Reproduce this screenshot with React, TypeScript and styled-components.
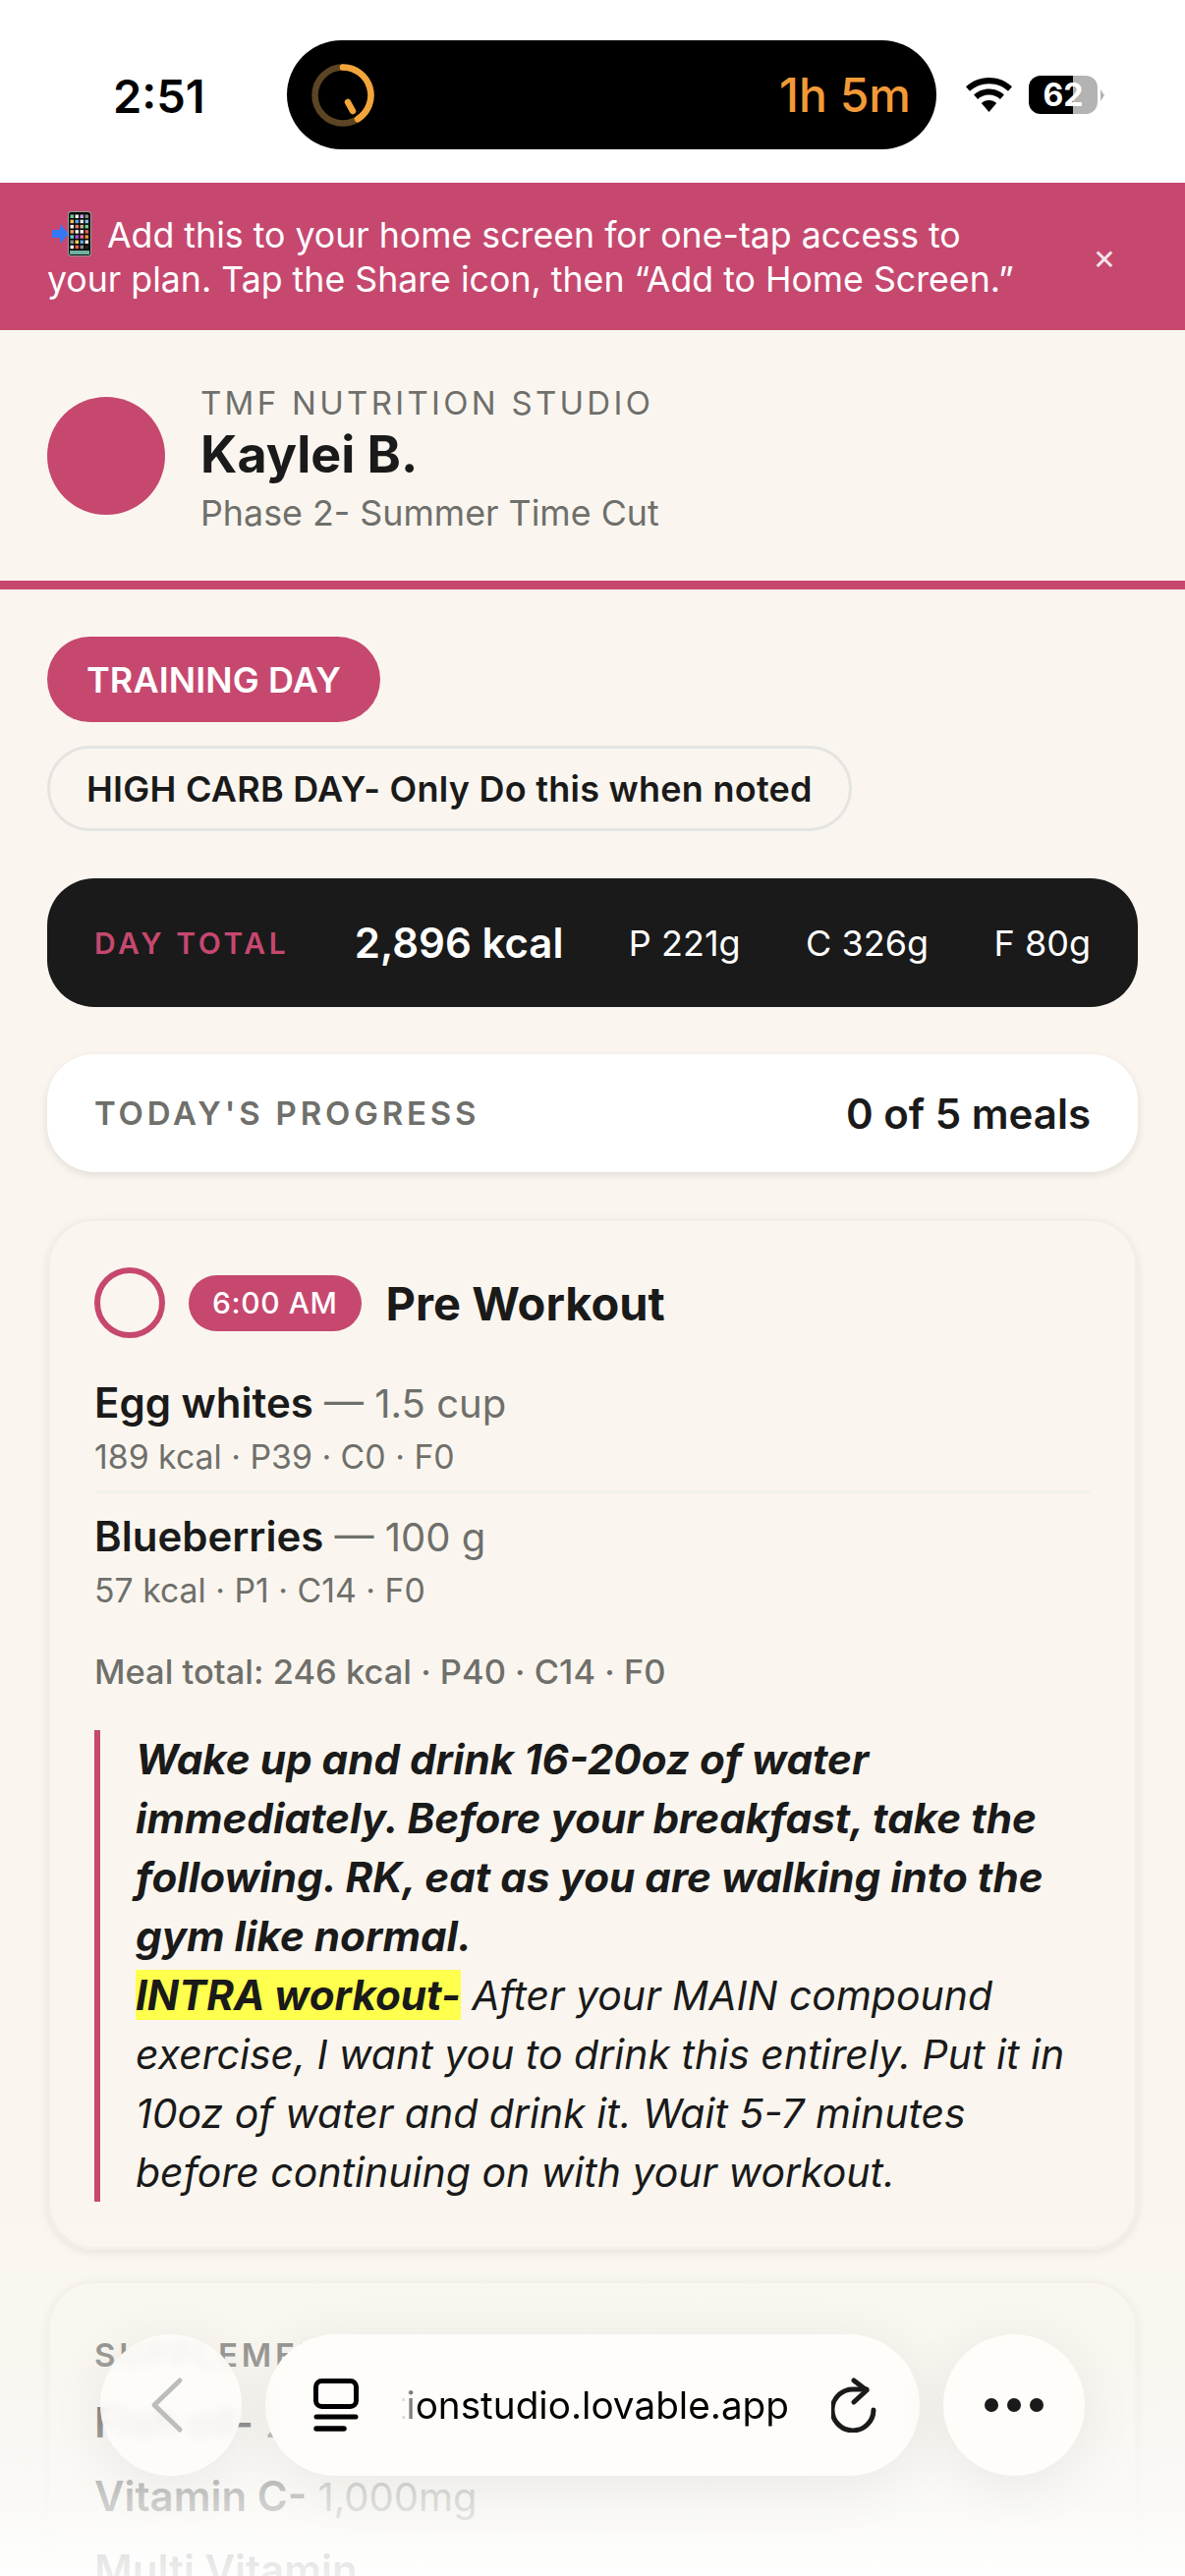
import styled, { createGlobalStyle } from 'styled-components'

const GlobalStyle = createGlobalStyle`
  html, body {
    margin: 0;
    padding: 0;
    background: #faf6ef;
  }
  * { box-sizing: border-box; }
`;

const rose = '#c6486f';
const ink = '#1a1a1a';
const muted = '#6f6f6b';

const foods = [
  { name: 'Egg whites', qty: '1.5 cup', macros: '189 kcal · P39 · C0 · F0' },
  { name: 'Blueberries', qty: '100 g', macros: '57 kcal · P1 · C14 · F0' },
];

const supplements = [
  { name: 'Fish oil-', qty: '2 caps' },
  { name: 'Vitamin C-', qty: '1,000mg' },
  { name: 'Multi Vitamin', qty: '' },
];

// app grid of the phone emoji, row by row
const appColors = [
  ['#6fd08c', '#f2f2f2', '#c9a0e8', '#8a8a8a'],
  ['#f2c14e', '#5aa9e6', '#e5e5e5', '#7cc4e8'],
  ['#f2f2f2', '#e8785a', '#c8b48a', '#6fd08c'],
  ['#e8a04e', '#f2f2f2', '#f2f2f2', '#e5604e'],
  ['#5ad0d0', '#b04ee0', '#e86aa0', '#f09030'],
  ['#8a8a8a', '#f2d04e', '#5aa9e6', '#f2f2f2'],
  ['#f2f2f2', '#e8584e', '#8a8a8a', '#222'],
];

function App() {
  return (
    <Page>
      <GlobalStyle />
      <StatusBar>
        <Clock>2:51</Clock>
        <Island>
          <svg width="64" height="64" viewBox="0 0 64 64" fill="none">
            <circle cx="32" cy="32" r="28.500" stroke="#5c4524" strokeWidth="6.500" />
            <path d="M32 3.500a28.500 28.500 0 0 1 15 52.700" stroke="#f3a43a" strokeWidth="6.500" strokeLinecap="round" />
            <path d="M37 39l5 9" stroke="#f3a43a" strokeWidth="6.500" strokeLinecap="round" />
          </svg>
          <Timer>1h 5m</Timer>
        </Island>
        <StatusIcons>
          <svg width="47" height="35" viewBox="0 0 47 35" fill="#000">
            <path d="M23.500 0C14.300 0 6 3.500 0 9.300l4 4.500C9 9.100 15.900 6.200 23.500 6.200S38 9.100 43 13.800l4-4.500C41 3.500 32.700 0 23.500 0z" />
            <path d="M23.500 11.500c-6 0-11.400 2.300-15.400 6.100l4 4.500c3-2.800 7-4.500 11.400-4.500s8.400 1.700 11.400 4.500l4-4.500c-4-3.800-9.400-6.100-15.400-6.100z" />
            <path d="M23.500 23c-3 0-5.700 1.100-7.700 3L23.500 35l7.700-9c-2-1.900-4.700-3-7.700-3z" />
          </svg>
          <Battery>
            <BatteryLevel>62</BatteryLevel>
            <BatteryTip />
          </Battery>
        </StatusIcons>
      </StatusBar>

      <Banner>
        <BannerText>
          <PhoneEmoji width="40" height="46" viewBox="0 0 40 46">
            <path d="M0 19h8v-6l9 10-9 10v-6H0z" fill="#3478f6" />
            <rect x="16" y="0" width="24" height="46" rx="3" fill="#9a9a9a" />
            <rect x="17" y="1" width="22" height="44" rx="2.500" fill="#0c0c0c" />
            {appColors.map((row, y) =>
              row.map((c, x) => (
                <rect key={`${x}-${y}`} x={18.500 + x * 5} y={3.500 + y * 5.200} width="3.500" height="3.500" fill={c} />
              ))
            )}
            <rect x="18" y="40" width="20" height="4" fill="#6fb0a0" />
          </PhoneEmoji>
          Add this to your home screen for one-tap access to your plan. Tap the Share icon, then “Add to Home Screen.”
        </BannerText>
        <Dismiss>×</Dismiss>
      </Banner>

      <Header>
        <Avatar />
        <HeaderText>
          <Studio>TMF NUTRITION STUDIO</Studio>
          <ClientName>Kaylei B.</ClientName>
          <Phase>Phase 2- Summer Time Cut</Phase>
        </HeaderText>
      </Header>

      <Main>
        <Pills>
          <Pill $active>TRAINING DAY</Pill>
          <Pill>HIGH CARB DAY- Only Do this when noted</Pill>
        </Pills>

        <TotalBar>
          <TotalLabel>DAY TOTAL</TotalLabel>
          <TotalKcal>2,896 kcal</TotalKcal>
          <TotalMacro>P 221g</TotalMacro>
          <TotalMacro>C 326g</TotalMacro>
          <TotalMacro>F 80g</TotalMacro>
        </TotalBar>

        <ProgressCard>
          <ProgressLabel>TODAY'S PROGRESS</ProgressLabel>
          <ProgressCount>0 of 5 meals</ProgressCount>
        </ProgressCard>

        <MealCard>
          <MealHead>
            <Check />
            <TimeBadge>6:00 AM</TimeBadge>
            <MealTitle>Pre Workout</MealTitle>
          </MealHead>
          <FoodList>
            {foods.map((f) => (
              <Food key={f.name}>
                <FoodLine><b>{f.name}</b> — {f.qty}</FoodLine>
                <Macros>{f.macros}</Macros>
              </Food>
            ))}
          </FoodList>
          <MealTotal>Meal total: 246 kcal · P40 · C14 · F0</MealTotal>
          <Note>
            <b>Wake up and drink 16-20oz of water immediately. Before your breakfast, take the following. RK, eat as you are walking into the gym like normal.</b>
            <br />
            <b><Mark>INTRA workout-</Mark></b> After your MAIN compound exercise, I want you to drink this entirely. Put it in 10oz of water and drink it. Wait 5-7 minutes before continuing on with your workout.
          </Note>
        </MealCard>

        <SupplementCard>
          <SupplementLabel>SUPPLEMENTS</SupplementLabel>
          {supplements.map((s) => (
            <SupplementRow key={s.name}><b>{s.name}</b> {s.qty}</SupplementRow>
          ))}
        </SupplementCard>
      </Main>

      <BottomFade />
      <BrowserBar>
        <BackButton>
          <svg width="36" height="58" viewBox="0 0 36 58" fill="none">
            <path d="M31 4L5 29l26 25" stroke="#bdbdbb" strokeWidth="5" strokeLinecap="round" strokeLinejoin="round" />
          </svg>
        </BackButton>
        <UrlPill>
          <svg width="46" height="55" viewBox="0 0 46 55" fill="none" stroke="#000" strokeWidth="5" strokeLinecap="round">
            <rect x="2.500" y="2.500" width="41" height="26" rx="6" />
            <path d="M3 39h40" />
            <path d="M3 51h28" strokeWidth="5.500" />
          </svg>
          <UrlClip><span>tmfnutritionstudio.lovable.app</span></UrlClip>
          <svg width="48" height="56" viewBox="0 0 48 56" fill="none" stroke="#1a1a1a" strokeWidth="5" strokeLinecap="round" strokeLinejoin="round">
            <path d="M43 33A21 21 0 1 1 24 12H36" />
            <path d="M23 3L36 13L23 25" />
          </svg>
        </UrlPill>
        <MoreButton>
          <Dot /><Dot /><Dot />
        </MoreButton>
      </BrowserBar>
    </Page>
  )
}

const Page = styled.div`
  position: relative;
  width: 1206px;
  height: 2622px;
  overflow: hidden;
  background: #faf6ef;
  font-family: Inter, "Liberation Sans", sans-serif;
  color: ${ink};
`;

const StatusBar = styled.div`
  height: 186px;
  background: #fff;
  padding: 41px 0 0 115px;
  display: flex;
  align-items: flex-start;
`;

const Clock = styled.div`
  width: 177px;
  height: 111px;
  line-height: 114px;
  font-size: 47px;
  font-weight: 600;
  color: #000;
`;

const Island = styled.div`
  width: 661px;
  height: 111px;
  border-radius: 56px;
  background: #000;
  display: flex;
  align-items: center;
  justify-content: space-between;
  padding: 0 26px 0 25px;
`;

const Timer = styled.span`
  font-size: 48px;
  font-weight: 500;
  color: #f19a38;
`;

const StatusIcons = styled.div`
  display: flex;
  align-items: center;
  gap: 17px;
  height: 111px;
  margin-left: 30px;
`;

const Battery = styled.div`
  display: flex;
  align-items: center;
`;

const BatteryLevel = styled.div`
  width: 70px;
  height: 39px;
  border-radius: 12px;
  background: linear-gradient(90deg, #000 64%, #b3b3b3 64%);
  color: #fff;
  font-size: 32px;
  font-weight: 700;
  line-height: 39px;
  text-align: center;
`;

const BatteryTip = styled.div`
  width: 0;
  height: 0;
  margin-left: 3px;
  border-top: 6px solid transparent;
  border-bottom: 6px solid transparent;
  border-left: 4px solid #b3b3b3;
`;

const Banner = styled.div`
  height: 150px;
  background: ${rose};
  color: #fff;
  display: flex;
  align-items: center;
  justify-content: space-between;
  padding: 0 48px;
`;

const BannerText = styled.div`
  width: 1000px;
  font-size: 35.700px;
  line-height: 45px;
`;

const PhoneEmoji = styled.svg`
  vertical-align: -9px;
  margin: 0 16px 0 5px;
`;

const Dismiss = styled.div`
  width: 28px;
  margin-right: 20px;
  text-align: center;
  font-size: 36px;
  line-height: 1;
  color: rgba(255, 255, 255, 0.85);
`;

const Header = styled.div`
  height: 264px;
  border-bottom: 9px solid ${rose};
  display: flex;
  align-items: center;
  gap: 36px;
  padding: 0 48px;
`;

const Avatar = styled.div`
  width: 120px;
  height: 120px;
  border-radius: 50%;
  background: ${rose};
`;

const HeaderText = styled.div`
  padding-top: 6px;
`;

const Studio = styled.div`
  font-size: 33px;
  line-height: 40px;
  letter-spacing: 3.300px;
  color: ${muted};
`;

const ClientName = styled.div`
  font-size: 52px;
  line-height: 62px;
  font-weight: 700;
  margin-top: 2px;
`;

const Phase = styled.div`
  font-size: 35.800px;
  line-height: 44px;
  color: ${muted};
  margin-top: 6px;
`;

const Main = styled.div`
  padding: 48px 48px 0;
  display: flex;
  flex-direction: column;
  gap: 48px;
`;

const Pills = styled.div`
  display: flex;
  flex-direction: column;
  align-items: flex-start;
  gap: 24px;
`;

const Pill = styled.div<{ $active?: boolean }>`
  height: 87px;
  border-radius: 44px;
  padding: 0 ${(p) => (p.$active ? 40 : 37)}px;
  display: flex;
  align-items: center;
  font-size: 36px;
  font-weight: 600;
  letter-spacing: ${(p) => (p.$active ? 0.1 : 0.25)}px;
  background: ${(p) => (p.$active ? rose : 'transparent')};
  color: ${(p) => (p.$active ? '#fff' : ink)};
  border: ${(p) => (p.$active ? 'none' : '3px solid #e4e4e2')};
`;

const TotalBar = styled.div`
  height: 131px;
  border-radius: 48px;
  background: ${ink};
  color: #fff;
  display: flex;
  align-items: center;
  justify-content: space-between;
  padding: 0 48px;
`;

const TotalLabel = styled.div`
  font-size: 30px;
  font-weight: 600;
  letter-spacing: 3.600px;
  color: ${rose};
`;

const TotalKcal = styled.div`
  font-size: 42px;
  font-weight: 600;
`;

const TotalMacro = styled.div`
  font-size: 36px;
`;

const ProgressCard = styled.div`
  height: 120px;
  margin-bottom: -1px;
  border-radius: 48px;
  background: #fff;
  box-shadow: 0 3px 9px rgba(0, 0, 0, 0.1);
  display: flex;
  align-items: center;
  justify-content: space-between;
  padding: 0 48px;
`;

const ProgressLabel = styled.div`
  font-size: 33px;
  font-weight: 600;
  letter-spacing: 3.800px;
  color: ${muted};
`;

const ProgressCount = styled.div`
  font-size: 42px;
  font-weight: 600;
`;

const MealCard = styled.div`
  border-radius: 48px;
  border: 3px solid #f3efe8;
  box-shadow: 0 3px 9px rgba(0, 0, 0, 0.08);
  padding: 47px 45px 46px;
`;

const MealHead = styled.div`
  display: flex;
  align-items: center;
  height: 72px;
  gap: 24px;
`;

const Check = styled.div`
  width: 72px;
  height: 72px;
  border-radius: 50%;
  border: 6px solid ${rose};
`;

const TimeBadge = styled.div`
  height: 57px;
  border-radius: 29px;
  background: ${rose};
  color: #fff;
  font-size: 30px;
  font-weight: 500;
  letter-spacing: 0.600px;
  padding: 0 24px;
  display: flex;
  align-items: center;
`;

const MealTitle = styled.div`
  font-size: 47px;
  font-weight: 700;
  margin-left: 1px;
`;

const FoodList = styled.div`
  margin-top: 22px;
`;

const Food = styled.div`
  padding: 17px 0 13px;
  & + & {
    border-top: 3px solid #f3f2ed;
  }
`;

const FoodLine = styled.div`
  font-size: 40px;
  line-height: 54px;
  color: ${muted};
  b {
    font-size: 42px;
    font-weight: 600;
    color: ${ink};
  }
`;

const Macros = styled.div`
  font-size: 33.800px;
  line-height: 42px;
  margin-top: 6px;
  color: ${muted};
`;

const MealTotal = styled.div`
  margin-top: 28px;
  font-size: 34.500px;
  line-height: 42px;
  font-weight: 500;
  color: ${muted};
`;

const Note = styled.div`
  margin-top: 38px;
  border-left: 6px solid ${rose};
  padding-left: 36px;
  font-size: 41px;
  line-height: 60px;
  font-style: italic;
  b {
    font-size: 42.200px;
  }
`;

const Mark = styled.span`
  background: #ffff4d;
`;

const SupplementCard = styled(MealCard)`
  margin-top: -17px;
  height: 700px;
  padding-top: 53px;
`;

const SupplementLabel = styled.div`
  font-size: 33px;
  line-height: 40px;
  margin-bottom: 22px;
  font-weight: 600;
  letter-spacing: 3.800px;
  color: ${muted};
`;

const SupplementRow = styled.div`
  font-size: 40px;
  line-height: 54px;
  margin-top: 20px;
  color: ${muted};
  b {
    font-size: 42px;
    font-weight: 600;
    color: ${ink};
  }
`;

const BottomFade = styled.div`
  position: absolute;
  left: 0;
  right: 0;
  bottom: 0;
  height: 372px;
  background: linear-gradient(180deg, rgba(250, 249, 246, 0) 0%, rgba(248, 247, 244, 0.32) 40%, rgba(250, 250, 248, 0.8) 80%, rgba(255, 255, 255, 0.92) 100%);
`;

const BrowserBar = styled.div`
  position: absolute;
  left: 102px;
  top: 2376px;
  display: flex;
  gap: 24px;
  height: 144px;
`;

const BackButton = styled.div`
  width: 144px;
  border-radius: 50%;
  background: rgba(254, 253, 250, 0.86);
  backdrop-filter: blur(6px);
  display: flex;
  align-items: center;
  justify-content: center;
  padding-right: 8px;
  box-shadow: 0 10px 60px rgba(0, 0, 0, 0.07);
`;

const UrlPill = styled.div`
  width: 666px;
  border-radius: 72px;
  background: #fefdfa;
  box-shadow: 0 10px 60px rgba(0, 0, 0, 0.07);
  display: flex;
  align-items: center;
  padding: 0 42px 0 49px;
`;

const UrlClip = styled.div`
  flex: 1;
  margin: 0 43px 0 43px;
  overflow: hidden;
  display: flex;
  justify-content: flex-end;
  white-space: nowrap;
  font-size: 38.700px;
  color: #000;
  mask-image: linear-gradient(90deg, transparent 0, #000 20px);
`;

const MoreButton = styled.div`
  width: 144px;
  border-radius: 50%;
  background: #fefdfa;
  box-shadow: 0 10px 60px rgba(0, 0, 0, 0.07);
  display: flex;
  align-items: center;
  justify-content: center;
  gap: 9px;
`;

const Dot = styled.span`
  width: 14px;
  height: 14px;
  border-radius: 50%;
  background: #1a1a1a;
`;

export default App
